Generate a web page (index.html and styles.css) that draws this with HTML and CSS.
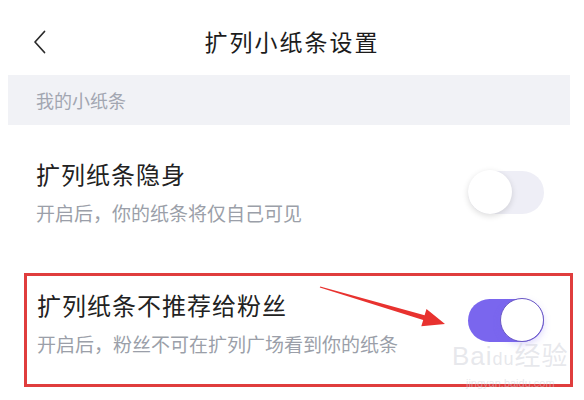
FILE: index.html
```html
<!DOCTYPE html>
<html lang="zh">
<head>
<meta charset="utf-8">
<link rel="stylesheet" href="styles.css">
</head>
<body>
<div class="page">
  <header class="header">
    <div class="back">
      <svg width="14" height="24" viewBox="0 0 14 24"><path d="M11.5 1.5 L2 12 L11.5 22.5" fill="none" stroke="#2a2a2a" stroke-width="1.7" stroke-linejoin="round" stroke-linecap="round"/></svg>
    </div>
    <div class="title">扩列小纸条设置</div>
    <div></div>
  </header>
  <div class="band">我的小纸条</div>
  <div class="row row-first">
    <div class="texts">
      <div class="item-title">扩列纸条隐身</div>
      <div class="item-sub">开启后，你的纸条将仅自己可见</div>
    </div>
    <div class="toggle off"><div class="knob"></div></div>
  </div>
  <div class="row row-boxed">
    <div class="texts">
      <div class="item-title">扩列纸条不推荐给粉丝</div>
      <div class="item-sub">开启后，粉丝不可在扩列广场看到你的纸条</div>
    </div>
    <div class="toggle on"><div class="knob"></div></div>
  </div>
  <svg class="arrow" width="584" height="400" viewBox="0 0 584 400">
    <polygon points="320.2,286.4 424.6,315.3 426.5,309.1 445,324 421.3,326.3 423.2,320.1 319.8,287.6" fill="#e8322f"/>
  </svg>
  <div class="watermark">
    <div class="wm-main">Bai<span class="wm-du">du</span>经验</div>
    <div class="wm-url">jingyan.baidu.com</div>
  </div>
</div>
</body>
</html>
```

FILE: styles.css
```css
* { box-sizing: border-box; }
html, body { margin: 0; padding: 0; background: #ffffff; }
body {
  font-family: "Noto Sans CJK SC", "Noto Sans", sans-serif;
  width: 584px;
  height: 400px;
  overflow: hidden;
}
.page { position: relative; width: 584px; height: 400px; }

.header {
  height: 75px;
  padding-top: 7px;
  display: grid;
  grid-template-columns: 1fr auto 1fr;
  align-items: center;
}
.back { padding-left: 33px; display: flex; align-items: center; padding-top: 2px; }
.title {
  font-size: 23px;
  letter-spacing: 2px;
  color: #1c1c1c;
  line-height: 30px;
}

.band {
  margin: 0 14px 0 8px;
  height: 50px;
  background: #f1f2f6;
  display: flex;
  align-items: center;
  padding-left: 28px;
  font-size: 18px;
  color: #a2a6b1;
}

.row {
  display: flex;
  align-items: center;
  justify-content: space-between;
}
.row-first {
  padding: 33px 40px 0 36px;
}
.row-boxed {
  margin: 47px 11px 0 24px;
  border: 3px solid #e03d3d;
  padding: 13px 26px 27px 10px;
}
.texts { display: flex; flex-direction: column; }
.item-title {
  font-size: 24px;
  letter-spacing: 1px;
  line-height: 32px;
  color: #222222;
}
.item-sub {
  margin-top: 10px;
  font-size: 19px;
  line-height: 26px;
  color: #9b9fa9;
}

.toggle {
  width: 76px;
  height: 43px;
  border-radius: 22px;
  display: flex;
  align-items: center;
}
.toggle .knob {
  width: 44px;
  height: 44px;
  flex: none;
  border-radius: 50%;
  background: #ffffff;
}
.toggle.off {
  background: #eeeef6;
  justify-content: flex-start;
}
.toggle.off .knob {
  box-shadow: 0 2px 6px rgba(0, 0, 0, 0.14);
}
.toggle.on {
  background: #7a66ee;
  justify-content: flex-end;
  margin-top: -6px;
}
.toggle.on .knob {
  border: 1.5px solid #6a58c4;
  box-shadow: 0 3px 7px rgba(122, 102, 238, 0.25);
}

.arrow { position: absolute; left: 0; top: 0; pointer-events: none; }

.watermark {
  position: absolute;
  left: 452px;
  top: 342px;
  color: rgba(208, 209, 218, 0.5);
  font-family: "Liberation Sans", "Noto Sans CJK SC", sans-serif;
  text-align: center;
}
.wm-main { font-size: 26px; line-height: 28px; letter-spacing: 1px; }
.wm-du { font-size: 18px; }
.wm-url { font-size: 11px; line-height: 16px; margin-top: 2px; }
```
